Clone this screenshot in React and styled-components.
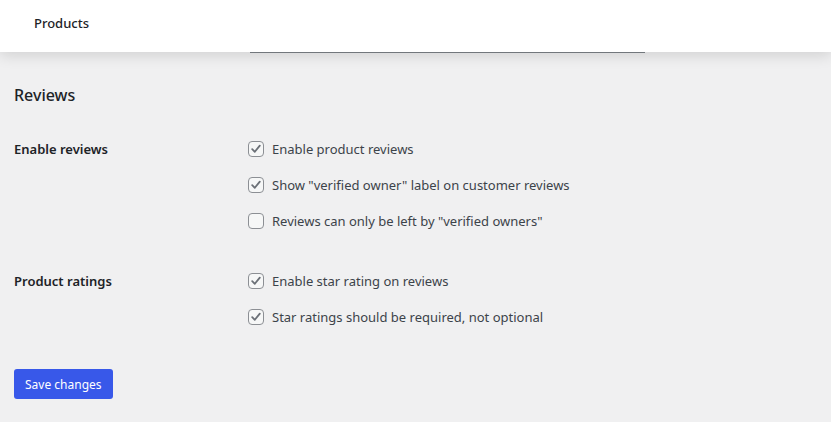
import styled, { createGlobalStyle } from 'styled-components';

const GlobalStyle = createGlobalStyle`
  html, body {
    margin: 0;
    padding: 0;
    background: #f0f0f1;
  }

  body {
    font-family: "Noto Sans", "Open Sans", sans-serif;
    font-size: 13px;
    color: #1d2327;
  }
`;

const Header = styled.header`
  position: relative;
  display: flex;
  align-items: flex-start;

  height: 52px;
  padding: 13px 34px 0;
  box-sizing: border-box;

  background: #fff;
  box-shadow: 0 3px 14px rgba(0, 0, 0, 0.14);
`;

const HeaderTitle = styled.div`
  font-size: 13px;
  font-weight: 500;
  line-height: 20px;
  color: #1d2327;
`;

const HeaderRule = styled.div`
  position: absolute;
  left: 250px;
  bottom: -1px;

  width: 395px;
  height: 1px;

  background: #72777c;
`;

const Main = styled.main`
  display: flex;
  flex-direction: column;
  align-items: flex-start;

  padding: 31px 14px 20px;
`;

const Heading = styled.h2`
  margin: 0 0 32px;

  font-size: 16px;
  font-weight: 500;
  line-height: 24px;
`;

const FieldRow = styled.div`
  display: grid;
  grid-template-columns: 234px 1fr;
  align-self: stretch;

  margin-bottom: 40px;
`;

const FieldLabel = styled.div`
  font-size: 13px;
  font-weight: 600;
  line-height: 20px;
`;

const OptionList = styled.div`
  display: flex;
  flex-direction: column;
  gap: 16px;
`;

const Option = styled.label`
  display: flex;
  align-items: center;
  gap: 8px;

  font-size: 13px;
  line-height: 20px;
  color: #3c434a;
`;

const Box = styled.span`
  display: flex;
  align-items: center;
  justify-content: center;
  flex: none;

  width: 14px;
  height: 14px;

  border: 1px solid #8c8f94;
  border-radius: 4px;
  background: #f6f7f7;
`;

const Check = () => (
  <svg width="12" height="12" viewBox="0 0 12 12">
    <path d="M2.2 6.2 L4.8 8.8 L9.8 2.6" fill="none" stroke="#6b7077" strokeWidth="1.8" strokeLinecap="round" strokeLinejoin="round" />
  </svg>
);

const Button = styled.button`
  height: 30px;
  padding: 0 11px;
  margin-top: 2px;

  font-family: inherit;
  font-size: 12px;
  color: #fff;

  background: #3858e9;
  border: none;
  border-radius: 3px;
`;

const sections = [
  {
    label: 'Enable reviews',
    options: [
      { text: 'Enable product reviews', checked: true },
      { text: 'Show "verified owner" label on customer reviews', checked: true },
      { text: 'Reviews can only be left by "verified owners"', checked: false }
    ]
  },
  {
    label: 'Product ratings',
    options: [
      { text: 'Enable star rating on reviews', checked: true },
      { text: 'Star ratings should be required, not optional', checked: true }
    ]
  }
];

const App = () => {
  return (
    <>
      <GlobalStyle />
      <Header>
        <HeaderTitle>Products</HeaderTitle>
        <HeaderRule />
      </Header>
      <Main>
        <Heading>Reviews</Heading>
        {sections.map((section) => (
          <FieldRow key={section.label}>
            <FieldLabel>{section.label}</FieldLabel>
            <OptionList>
              {section.options.map((option) => (
                <Option key={option.text}>
                  <Box>{option.checked && <Check />}</Box>
                  {option.text}
                </Option>
              ))}
            </OptionList>
          </FieldRow>
        ))}
        <Button>Save changes</Button>
      </Main>
    </>
  );
};

export default App;
